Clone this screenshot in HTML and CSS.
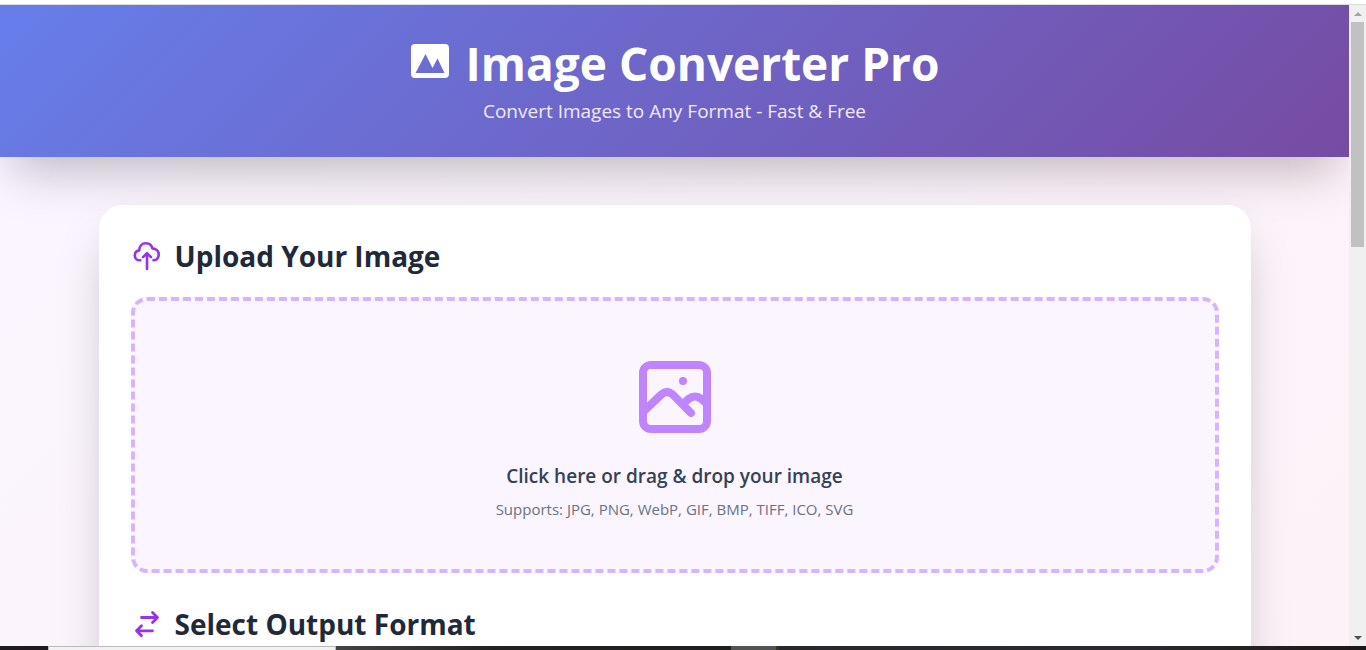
FILE: index.html
```html
<!DOCTYPE html>
<html lang="en">
<head>
<meta charset="utf-8">
<meta name="viewport" content="width=device-width, initial-scale=1">
<title>Image Converter Pro</title>
<link rel="stylesheet" href="styles.css">
</head>
<body>
<div class="window-edge"></div>
<div class="viewport">
  <div class="page">
    <header class="header">
      <h1 class="title">
        <svg class="title-icon" viewBox="0 0 40 36" aria-hidden="true"><path fill="currentColor" fill-rule="evenodd" d="M5 1h30a4 4 0 0 1 4 4v26a4 4 0 0 1-4 4H5a4 4 0 0 1-4-4V5a4 4 0 0 1 4-4zM5.500 30h29L27.500 15.500l-5 9.500L15.500 11z"/></svg>
        <span>Image Converter Pro</span>
      </h1>
      <p class="tagline">Convert Images to Any Format - Fast &amp; Free</p>
    </header>
    <main class="main">
      <section class="card">
        <h2 class="heading">
          <svg class="heading-icon" viewBox="0 0 30 32" aria-hidden="true"><g fill="none" stroke="currentColor" stroke-width="2.600" stroke-linecap="round" stroke-linejoin="round"><path d="M9.300 20.300C5.800 20.500 3.800 18.500 3.800 15.600c0-2.800 1.800-4.900 4.400-5.200C8.400 6.200 11.200 3.200 14.800 3.200c3.500 0 5.900 2 6.600 5.200 3.700.2 6.300 2.800 6.300 6 0 3.100-2 5.500-5.200 5.900"/><path d="M16 29V14M12 17.200 16 13.200l4 4"/></g></svg>
          <span>Upload Your Image</span>
        </h2>
        <button class="dropzone" type="button">
          <svg class="drop-icon" viewBox="0 0 72 72" aria-hidden="true"><g fill="none" stroke="currentColor" stroke-width="8"><rect x="4" y="4" width="64" height="64" rx="8"/><path stroke-linecap="round" stroke-linejoin="round" d="M4 51 22.300 33.500q5.700-5 11.400 0L52 52M44 43l5.500-5q6.500-5 13 0L68 43"/></g><circle cx="44" cy="20" r="4" fill="currentColor"/></svg>
          <span class="drop-title">Click here or drag &amp; drop your image</span>
          <span class="drop-note">Supports: JPG, PNG, WebP, GIF, BMP, TIFF, ICO, SVG</span>
        </button>
        <h2 class="heading">
          <svg class="heading-icon" viewBox="0 0 30 32" aria-hidden="true"><path fill="none" stroke="currentColor" stroke-width="2.800" stroke-linecap="round" stroke-linejoin="round" d="M10.500 9.500H26.500M21.500 4.500l5 5-5 5M21.500 22.800H5.500M10.500 17.800l-5 5 5 5"/></svg>
          <span>Select Output Format</span>
        </h2>
      </section>
    </main>
  </div>
  <div class="scrollbar" aria-hidden="true">
    <span class="arrow arrow-up"></span>
    <span class="track"><span class="thumb"></span></span>
    <span class="arrow arrow-down"></span>
  </div>
</div>
<div class="taskbar"><span class="task-start"></span><span class="task-search"></span><span class="task-apps"></span><span class="task-active"></span><span class="task-rest"></span></div>
</body>
</html>
```
FILE: styles.css
```css
* { box-sizing: border-box; }

body {
  margin: 0;
  height: 100vh;
  display: flex;
  flex-direction: column;
  overflow: hidden;
  background: #fff;
  font-family: "Segoe UI", "Open Sans", "Noto Sans", sans-serif;
}

.window-edge {
  flex: none;
  height: 5px;
  border-bottom: 1px solid #ddd;
}

.viewport {
  flex: 1;
  min-height: 0;
  display: flex;
}

.page {
  flex: 1;
  min-width: 0;
  overflow: hidden;
  background: linear-gradient(135deg, #faf5ff, #fdf2f8 64%, #eff6ff) top / 100% 1730px;
}

.header {
  padding: 32px 16px;
  text-align: center;
  color: #fff;
  background: linear-gradient(135deg, #667eea, #764ba2);
  box-shadow: 0 25px 50px -12px rgba(0, 0, 0, 0.25);
}

.title {
  margin: 0 0 8px;
  display: flex;
  justify-content: center;
  gap: 16px;
  font-size: 46px;
  line-height: 52px;
  font-weight: 700;
}

.title-icon {
  width: 40px;
  height: 36px;
  margin-top: 6px;
}

.tagline {
  margin: 0;
  font-size: 19px;
  line-height: 28px;
  color: #f3e8ff;
}

.main {
  max-width: 1184px;
  margin: 0 auto;
  padding: 48px 16px;
}

.card {
  padding: 32px;
  border-radius: 24px;
  background: #fff;
  box-shadow: 0 25px 50px -12px rgba(0, 0, 0, 0.25);
}

.heading {
  margin: 0 0 22px;
  display: flex;
  align-items: center;
  gap: 14px;
  color: #1f2937;
  font-size: 28px;
  line-height: 38px;
  font-weight: 700;
}

.heading-icon {
  width: 30px;
  height: 32px;
  color: #9333ea;
}

.dropzone {
  width: 100%;
  margin-bottom: 32px;
  padding: 60px 44px 48px;
  display: flex;
  flex-direction: column;
  align-items: center;
  border: 4px dashed #d8b4fe;
  border-radius: 16px;
  background: #faf5ff;
  font-family: inherit;
  cursor: pointer;
}

.drop-icon {
  width: 72px;
  height: 72px;
  margin-bottom: 29px;
  color: #c084fc;
}

.drop-title {
  margin-bottom: 7px;
  color: #374151;
  font-size: 19px;
  line-height: 28px;
  font-weight: 600;
}

.drop-note {
  color: #6b7280;
  font-size: 15px;
  line-height: 24px;
}

.scrollbar {
  flex: none;
  width: 17px;
  display: flex;
  flex-direction: column;
  background: #f0f0f0;
}

.arrow {
  height: 17px;
  display: grid;
  place-items: center;
}

.arrow::before {
  content: "";
  border: 4px solid transparent;
}

.arrow-up::before { border-top: 0; border-bottom-color: #a3a3a3; }
.arrow-down::before { border-bottom: 0; border-top-color: #505050; }

.track {
  flex: 1;
  padding: 0 2px;
}

.thumb {
  display: block;
  height: 37%;
  background: #c1c1c1;
}

.taskbar {
  flex: none;
  height: 4px;
  display: flex;
  background: #1d1b1d;
}

.task-start { width: 48px; }
.task-search { width: 288px; background: #f2f2f2; border: 1px solid #bbb; border-bottom: 0; }
.task-apps { width: 395px; background: linear-gradient(90deg, #444, #222 40%, #1d1f20); }
.task-active { width: 48px; background: #505452; border-right: 3px solid #333; }
.task-rest { flex: 1; background: linear-gradient(90deg, #25282e, #292b31 60%, #1c1818); }
```
